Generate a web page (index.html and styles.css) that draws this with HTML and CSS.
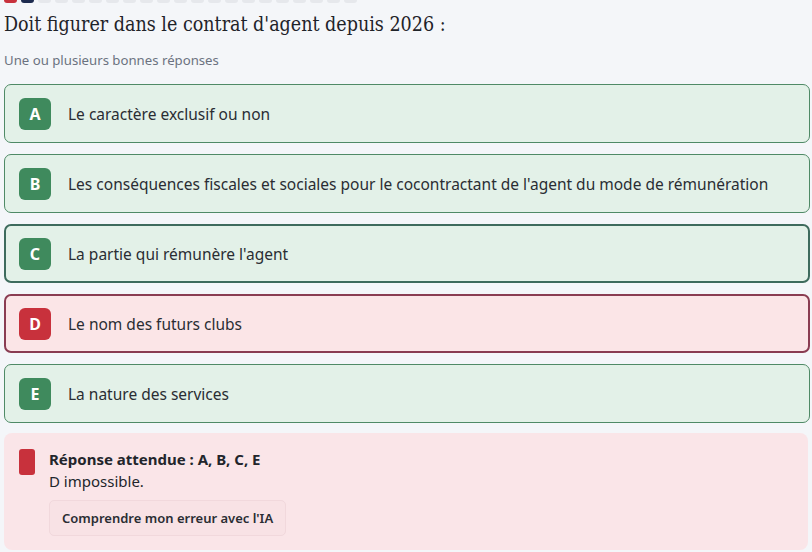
FILE: index.html
```html
<!DOCTYPE html>
<html lang="fr">
<head>
<meta charset="utf-8">
<link rel="stylesheet" href="styles.css">
</head>
<body>
<div class="page">
  <div class="progress">
    <span class="seg red"></span><span class="seg navy"></span>
    <span class="seg"></span><span class="seg"></span><span class="seg"></span><span class="seg"></span><span class="seg"></span><span class="seg"></span><span class="seg"></span><span class="seg"></span><span class="seg"></span><span class="seg"></span><span class="seg"></span><span class="seg"></span><span class="seg"></span><span class="seg"></span><span class="seg"></span><span class="seg"></span><span class="seg"></span><span class="seg"></span><span class="seg"></span>
  </div>
  <h1 class="question">Doit figurer dans le contrat d'agent depuis 2026 :</h1>
  <p class="hint">Une ou plusieurs bonnes réponses</p>
  <div class="options">
    <div class="option ok"><span class="badge">A</span><span class="label">Le caractère exclusif ou non</span></div>
    <div class="option ok"><span class="badge">B</span><span class="label">Les conséquences fiscales et sociales pour le cocontractant de l'agent du mode de rémunération</span></div>
    <div class="option ok picked"><span class="badge">C</span><span class="label">La partie qui rémunère l'agent</span></div>
    <div class="option bad picked"><span class="badge">D</span><span class="label">Le nom des futurs clubs</span></div>
    <div class="option ok"><span class="badge">E</span><span class="label">La nature des services</span></div>
  </div>
  <div class="feedback">
    <span class="mark"></span>
    <div class="fb-body">
      <div class="fb-title">Réponse attendue : A, B, C, E</div>
      <div class="fb-text">D impossible.</div>
      <button class="fb-btn">Comprendre mon erreur avec l'IA</button>
    </div>
  </div>
</div>
</body>
</html>
```

FILE: styles.css
```css
* { box-sizing: border-box; }
html, body { margin: 0; padding: 0; }
body {
  background: #f4f6f9;
  font-family: "Noto Sans", "Liberation Sans", sans-serif;
  color: #24272d;
}
.page {
  padding: 0 2px 0 4px;
}
.progress {
  display: flex;
  gap: 4px;
  height: 3px;
}
.seg {
  width: 13px;
  height: 3px;
  background: #e6e8ec;
  border-radius: 0 0 3px 3px;
}
.seg.red { background: #c8313c; }
.seg.navy { background: #1d2b4f; }
.question {
  margin: 8px 0 0;
  font-family: "DejaVu Serif Condensed", "DejaVu Serif", "Liberation Serif", serif;
  font-stretch: condensed;
  font-weight: 400;
  font-size: 19.5px;
  line-height: 28px;
  color: #1f2329;
}
.hint {
  margin: 12px 0 0;
  font-size: 13.2px;
  line-height: 18px;
  color: #6b7280;
}
.options {
  margin-top: 15px;
  display: flex;
  flex-direction: column;
  gap: 11px;
}
.option {
  height: 59px;
  display: flex;
  align-items: center;
  gap: 17px;
  padding: 0 14px;
  border: 1px solid #4f8a66;
  border-radius: 7px;
  background: #e3f1e8;
}
.option.picked { border-width: 2px; padding: 0 13px; }
.option.ok.picked { border-color: #3e6b5d; }
.option.bad { background: #fbe5e7; border-color: #8a3c52; }
.badge {
  width: 32px;
  height: 32px;
  border-radius: 6px;
  background: #3f8a5d;
  color: #fff;
  font-weight: 700;
  font-size: 16px;
  display: flex;
  align-items: center;
  justify-content: center;
  flex: none;
}
.option.bad .badge { background: #c8313c; }
.label {
  font-size: 15.5px;
  color: #2a2d33;
}
.feedback {
  margin-top: 10px;
  margin-right: 2px;
  background: #fae5e8;
  border-radius: 8px;
  padding: 16px 14px 12px 15px;
  display: flex;
  gap: 14px;
  height: 117px;
}
.mark {
  width: 16px;
  height: 26px;
  border-radius: 3px;
  background: #c8313c;
  flex: none;
}
.fb-title {
  font-weight: 700;
  font-size: 15px;
  line-height: 20px;
  color: #22252b;
}
.fb-text {
  font-size: 15px;
  line-height: 24px;
  color: #22252b;
}
.fb-btn {
  margin-top: 7px;
  height: 36px;
  padding: 0 12px;
  background: #f8e2e5;
  border: 1px solid #f1d8dc;
  border-radius: 5px;
  font-family: "Noto Sans", "Liberation Sans", sans-serif;
  font-size: 13px;
  font-weight: 600;
  color: #2a2d33;
}
```
